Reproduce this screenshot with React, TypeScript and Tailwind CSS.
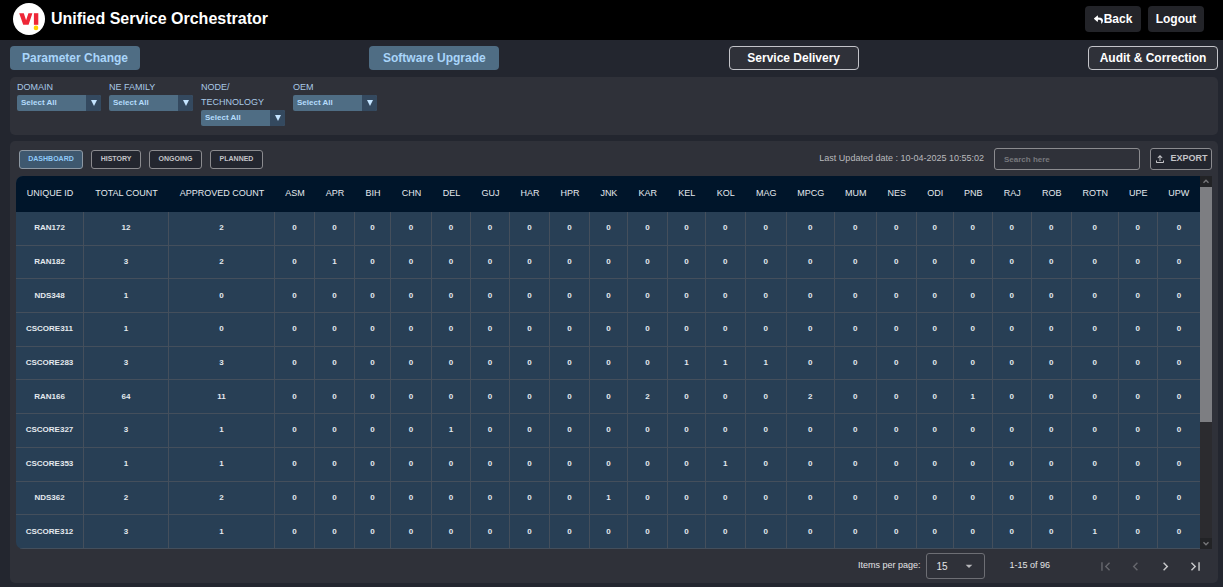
import React from "react";
import { FaReply } from "react-icons/fa";
import {
  MdArrowDropDown,
  MdChevronLeft,
  MdChevronRight,
  MdFirstPage,
  MdLastPage,
  MdOutlineFileUpload,
} from "react-icons/md";

const columns: [string, number][] = [
  ["UNIQUE ID", 68],
  ["TOTAL COUNT", 85],
  ["APPROVED COUNT", 106],
  ["ASM", 40],
  ["APR", 40],
  ["BIH", 36],
  ["CHN", 41],
  ["DEL", 39],
  ["GUJ", 39],
  ["HAR", 40],
  ["HPR", 40],
  ["JNK", 38],
  ["KAR", 40],
  ["KEL", 38],
  ["KOL", 40],
  ["MAG", 41],
  ["MPCG", 48],
  ["MUM", 42],
  ["NES", 40],
  ["ODI", 37],
  ["PNB", 39],
  ["RAJ", 39],
  ["ROB", 40],
  ["ROTN", 47],
  ["UPE", 39],
  ["UPW", 42],
];
const totalWidth = columns.reduce((sum, [, width]) => sum + width, 0);

type Row = { id: string; total: number; approved: number; circles?: Record<string, number> };

const rows: Row[] = [
  { id: "RAN172", total: 12, approved: 2 },
  { id: "RAN182", total: 3, approved: 2, circles: { APR: 1 } },
  { id: "NDS348", total: 1, approved: 0 },
  { id: "CSCORE311", total: 1, approved: 0 },
  { id: "CSCORE283", total: 3, approved: 3, circles: { KEL: 1, KOL: 1, MAG: 1 } },
  { id: "RAN166", total: 64, approved: 11, circles: { KAR: 2, MPCG: 2, PNB: 1 } },
  { id: "CSCORE327", total: 3, approved: 1, circles: { DEL: 1 } },
  { id: "CSCORE353", total: 1, approved: 1, circles: { KOL: 1 } },
  { id: "NDS362", total: 2, approved: 2, circles: { JNK: 1 } },
  { id: "CSCORE312", total: 3, approved: 1, circles: { ROTN: 1 } },
];

const modules = [
  { name: "Parameter Change", active: true },
  { name: "Software Upgrade", active: true },
  { name: "Service Delivery", active: false },
  { name: "Audit & Correction", active: false },
];

const filters = [
  { id: "domain", label: "DOMAIN" },
  { id: "ne-family", label: "NE FAMILY" },
  { id: "technology", label: "NODE/ TECHNOLOGY" },
  { id: "oem", label: "OEM" },
];

const views = [
  { name: "HISTORY", width: "w-[50px]" },
  { name: "ONGOING", width: "w-[53px]" },
  { name: "PLANNED", width: "w-[53px]" },
];

function Logo() {
  return (
    <svg viewBox="0 0 32 32" className="size-8" aria-hidden="true">
      <circle cx="16" cy="16" r="16" fill="#fff" />
      <path d="M6.2 10.2h4.6l2.3 7 2.3-7h4L15.600 21.800h-5.400z" fill="#ee2737" />
      <path d="M20.900 10.200h4.400v11.600h-4.400z" fill="#ee2737" />
      <circle cx="23" cy="24.900" r="2.300" fill="#ffd100" />
    </svg>
  );
}

function Header() {
  return (
    <header className="flex h-10 items-center justify-between bg-black pr-[19px] pb-[2px] pl-[13px]">
      <div className="flex items-center gap-[6px]">
        <Logo />
        <h1 className="text-[16px] font-bold text-white">Unified Service Orchestrator</h1>
      </div>
      <div className="flex gap-[7px] text-[12px] font-bold text-white">
        <button className="flex h-[26px] w-14 items-center justify-center gap-px rounded-[4px] bg-[#232429]">
          <FaReply className="size-[9px]" />
          Back
        </button>
        <button className="h-[26px] w-14 rounded-[4px] bg-[#232429]">Logout</button>
      </div>
    </header>
  );
}

function Filters() {
  return (
    <section className="flex h-[58px] items-start gap-2 rounded-[5px] bg-[#2f3139] px-[7px] pt-[3px]">
      {filters.map((f) => (
        <div key={f.id} className="flex w-[84px] flex-col">
          <label htmlFor={f.id} className="w-[70px] text-[9px] leading-[15px] text-[#a9c9e6]">
            {f.label}
          </label>
          <div className="grid">
            <select
              id={f.id}
              className="col-start-1 row-start-1 h-4 appearance-none rounded-[2px] bg-[#4f6d84] pl-1 text-[8px] font-bold text-[#b5dcfb]"
            >
              <option>Select All</option>
            </select>
            <span className="pointer-events-none col-start-1 row-start-1 flex w-[15px] items-center justify-center justify-self-end rounded-r-[2px] bg-[#34495f]">
              <svg viewBox="0 0 6 6" className="size-[6px]" aria-hidden="true">
                <path d="M0 0h6L3 6z" fill="#c4e4ff" />
              </svg>
            </span>
          </div>
        </div>
      ))}
    </section>
  );
}

const tabStyle = "h-[19px] rounded-[3px] border text-[7px] font-bold";

function Toolbar() {
  return (
    <div className="flex items-center justify-between">
      <nav className="flex gap-2 pl-[3px]">
        <button className={`${tabStyle} w-16 border-[#8d98a3] bg-[#3e586f] text-[#90caf9]`}>DASHBOARD</button>
        {views.map((v) => (
          <button key={v.name} className={`${tabStyle} ${v.width} border-[#8b8b8f] bg-[#23262f] text-[#c4c4c8]`}>
            {v.name}
          </button>
        ))}
      </nav>
      <div className="flex items-center gap-[10px]">
        <span className="text-[9px] text-[#b9babd]">Last Updated date : 10-04-2025 10:55:02</span>
        <input
          type="search"
          aria-label="Search"
          placeholder="Search here"
          className="h-[22px] w-[146px] rounded-[3px] border border-[#8b8b8f] bg-transparent px-[9px] text-[8px] font-bold text-white placeholder:text-[#77787d]"
        />
        <button className="flex h-[22px] w-[62px] items-center justify-center gap-1 rounded-[3px] border border-[#8b8b8f] bg-[#23262f] text-[9px] font-bold text-[#c4c4c8]">
          <MdOutlineFileUpload className="size-3" />
          EXPORT
        </button>
      </div>
    </div>
  );
}

function ScrollBar() {
  return (
    <div className="flex w-3 shrink-0 flex-col items-center bg-[#2b2b2f]" aria-hidden="true">
      <svg viewBox="0 0 11 11" className="h-[11px] w-full bg-[#222326]">
        <path d="M3 6.8l2.5-2.6L8 6.8" fill="none" stroke="#77787b" strokeWidth="1.3" />
      </svg>
      <div className="h-[235px] w-full bg-[#7d7e82]" />
      <svg viewBox="0 0 11 11" className="mt-auto h-[11px] w-full bg-[#222326]">
        <path d="M3 4.2l2.5 2.6L8 4.2" fill="none" stroke="#77787b" strokeWidth="1.3" />
      </svg>
    </div>
  );
}

function DataTable() {
  return (
    <div className="mt-[6px] flex h-[373px]">
      <div className="grow overflow-hidden rounded-l-[7px] bg-[#283f55]">
        <table className="h-full w-full table-fixed border-separate border-spacing-0 text-center text-[#e4e9ee]">
          <colgroup>
            {columns.map(([name, width]) => (
              <col key={name} style={{ width: `${(width / totalWidth) * 100}%` }} />
            ))}
          </colgroup>
          <thead className="bg-[#00152a] text-[9px]">
            <tr className="h-9">
              {columns.map(([name]) => (
                <th key={name} scope="col" className="p-0 font-normal whitespace-nowrap">
                  {name}
                </th>
              ))}
            </tr>
          </thead>
          <tbody className="text-[8px] font-bold">
            {rows.map((row) => (
              <tr key={row.id}>
                {columns.map(([name], i) => (
                  <td key={name} className="border-r border-b border-[#444f5c] p-0 last:border-r-0">
                    {i === 0 ? row.id : i === 1 ? row.total : i === 2 ? row.approved : (row.circles?.[name] ?? 0)}
                  </td>
                ))}
              </tr>
            ))}
          </tbody>
        </table>
      </div>
      <ScrollBar />
    </div>
  );
}

function Pager() {
  return (
    <div className="flex h-[34px] items-center justify-end pr-2 text-[9px] text-[#e3e4e6]">
      <label htmlFor="page-size">Items per page:</label>
      <div className="ml-[6px] grid items-center">
        <select
          id="page-size"
          className="col-start-1 row-start-1 h-[26px] w-[59px] appearance-none rounded-[3px] border border-[#6d6e74] bg-transparent pl-[9px] text-[10px]"
        >
          <option>15</option>
        </select>
        <MdArrowDropDown className="pointer-events-none col-start-1 row-start-1 mr-2 size-4 justify-self-end text-[#b7b8bb]" />
      </div>
      <span className="ml-6">1-15 of 96</span>
      <div className="ml-[47px] flex gap-[13px]">
        <button aria-label="First page" disabled className="text-[#66676d]">
          <MdFirstPage className="size-[17px]" />
        </button>
        <button aria-label="Previous page" disabled className="text-[#66676d]">
          <MdChevronLeft className="size-[17px]" />
        </button>
        <button aria-label="Next page" className="text-[#c8c9cb]">
          <MdChevronRight className="size-[17px]" />
        </button>
        <button aria-label="Last page" className="text-[#c8c9cb]">
          <MdLastPage className="size-[17px]" />
        </button>
      </div>
    </div>
  );
}

export default function App() {
  return (
    <div className="min-h-screen bg-[#23262f] font-['Liberation_Sans',Arial,sans-serif]">
      <Header />
      <main className="flex flex-col pt-[6px] pr-[5px] pl-[10px]">
        <nav className="flex justify-between">
          {modules.map((m) => (
            <button
              key={m.name}
              className={`h-6 w-[130px] rounded-[4px] text-[12px] font-bold whitespace-nowrap ${
                m.active ? "bg-[#4f6d84] text-[#a9d5fa]" : "border border-[#c3c4c9] bg-[#2f3139] text-white"
              }`}
            >
              {m.name}
            </button>
          ))}
        </nav>
        <div className="mt-[7px] flex flex-col gap-[6px]">
          <Filters />
          <section className="rounded-[5px] bg-[#2f3139] px-[6px] pt-[7px]">
            <Toolbar />
            <DataTable />
            <Pager />
          </section>
        </div>
      </main>
    </div>
  );
}
